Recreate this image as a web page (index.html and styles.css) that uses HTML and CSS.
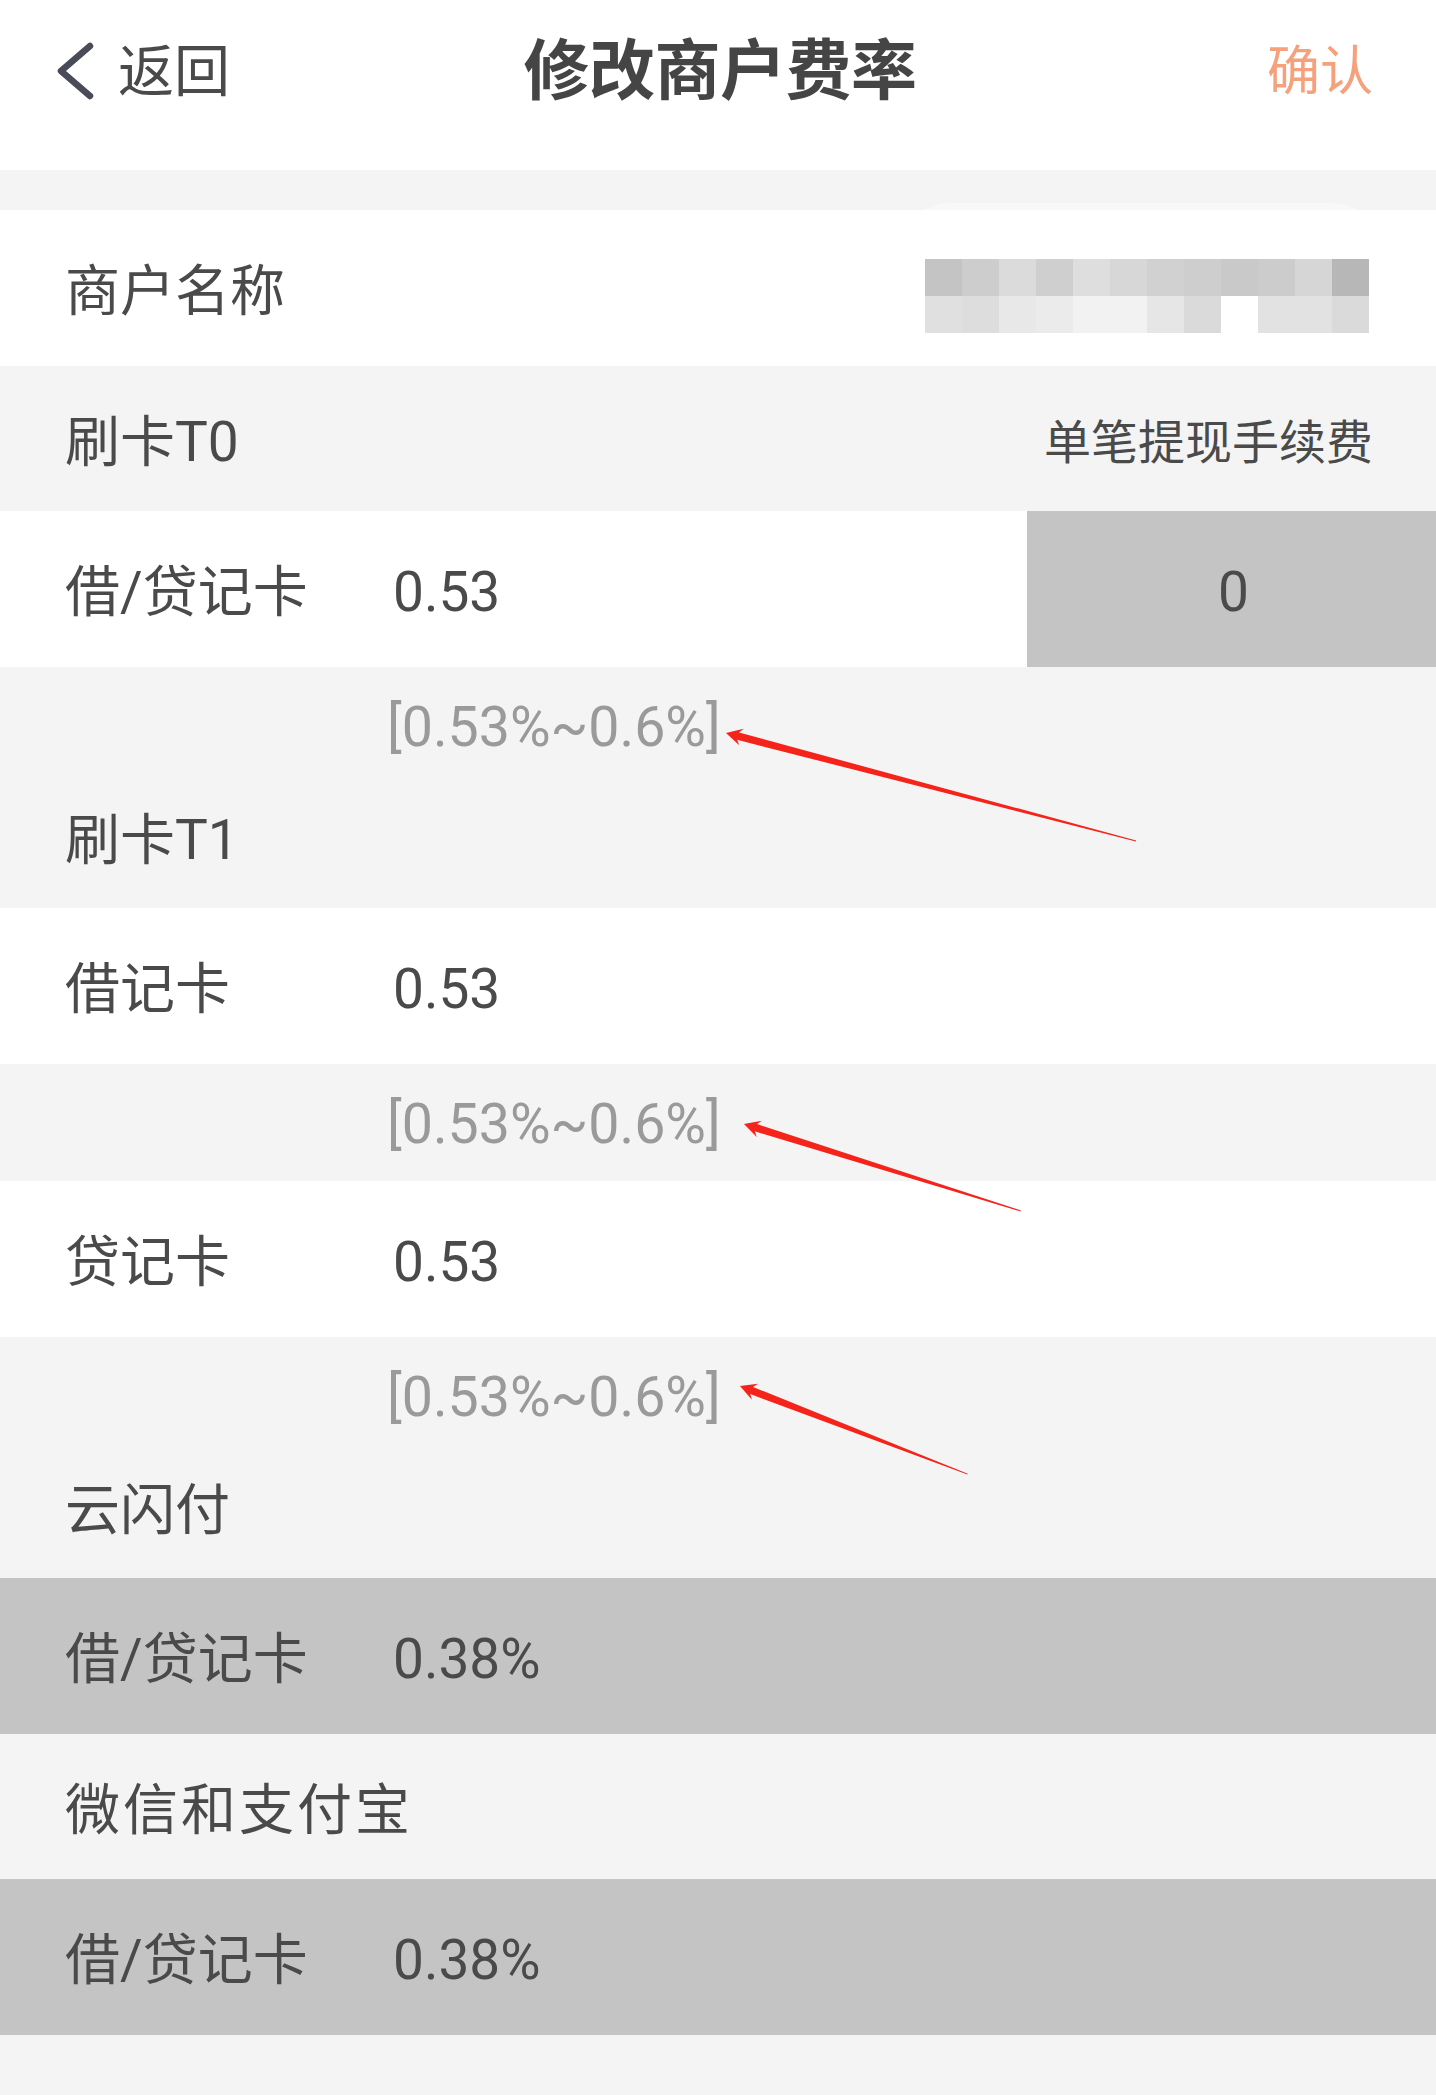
FILE: index.html
```html
<!DOCTYPE html>
<html lang="zh-CN">
<head>
<meta charset="utf-8">
<title>修改商户费率</title>
<link rel="stylesheet" href="styles.css">
</head>
<body>
<div class="page">
  <header class="topbar">
    <div class="back">
      <svg class="chevron" viewBox="0 0 44 72" width="44" height="72"><polyline points="38,10 9,35 38,60" fill="none" stroke="#494c58" stroke-width="6.5" stroke-linecap="round" stroke-linejoin="round"/></svg>
      <span>返回</span>
    </div>
    <h1 class="title">修改商户费率</h1>
    <div class="confirm">确认</div>
  </header>
  <div class="gap"></div>

  <div class="row white merchant">
    <span class="label">商户名称</span>
    <div class="mosaic">
      <span></span><span></span><span></span><span></span><span></span><span></span><span></span><span></span><span></span><span></span><span></span><span></span>
      <span></span><span></span><span></span><span></span><span></span><span></span><span></span><span></span><span></span><span></span><span></span><span></span>
    </div>
  </div>

  <div class="row section">
    <span class="label">刷卡T0</span>
    <span class="fee-head">单笔提现手续费</span>
  </div>

  <div class="row white entry">
    <span class="label">借/贷记卡</span>
    <span class="value">0.53</span>
    <span class="fee-box">0</span>
  </div>
  <div class="hint">[0.53%~0.6%]</div>
  <div class="row section tight">
    <span class="label">刷卡T1</span>
  </div>

  <div class="row white entry">
    <span class="label">借记卡</span>
    <span class="value">0.53</span>
  </div>
  <div class="hint">[0.53%~0.6%]</div>

  <div class="row white entry">
    <span class="label">贷记卡</span>
    <span class="value">0.53</span>
  </div>
  <div class="hint">[0.53%~0.6%]</div>
  <div class="row section tight">
    <span class="label">云闪付</span>
  </div>

  <div class="row locked entry">
    <span class="label">借/贷记卡</span>
    <span class="value">0.38%</span>
  </div>

  <div class="row section">
    <span class="label label-wide">微信和支付宝</span>
  </div>

  <div class="row locked entry">
    <span class="label">借/贷记卡</span>
    <span class="value">0.38%</span>
  </div>

  <svg class="arrows" viewBox="0 0 1436 2095" width="1436" height="2095">
    <g fill="#f5231a">
      <g transform="translate(726 733) rotate(14.76)">
        <polygon points="0,0 16,-8.5 12.5,-3.8 424,-0.5 424,0.5 12.5,3.8 16,8.5"/>
      </g>
      <g transform="translate(744 1124) rotate(17.44)">
        <polygon points="0,0 16,-8.5 12.5,-3.8 290,-0.5 290,0.5 12.5,3.8 16,8.5"/>
      </g>
      <g transform="translate(740 1386) rotate(21.17)">
        <polygon points="0,0 16,-8.5 12.5,-3.8 244,-0.5 244,0.5 12.5,3.8 16,8.5"/>
      </g>
    </g>
  </svg>
</div>
</body>
</html>
```

FILE: styles.css
```css
* { box-sizing: border-box; }

html, body {
  margin: 0;
  padding: 0;
  background: #f4f4f4;
}

body {
  font-family: Roboto, "Noto Sans CJK SC", "Noto Sans", sans-serif;
  color: #4a4a4a;
}

.page {
  position: relative;
  width: 1436px;
  min-height: 2095px;
  background: #f4f4f4;
}

/* ---------- top bar ---------- */
.topbar {
  display: grid;
  grid-template-columns: 1fr auto 1fr;
  align-items: center;
  height: 170px;
  padding: 0 63px 26px 63px;
  background: #ffffff;
}

.back {
  display: flex;
  align-items: center;
  gap: 22px;
  margin-left: -11px;
  font-size: 56px;
  color: #4a4a4a;
  line-height: 1;
}

.chevron { display: block; }

.title {
  margin: 0 0 0 4px;
  font-size: 66px;
  font-weight: 700;
  color: #454545;
  line-height: 1;
  letter-spacing: -0.5px;
}

.confirm {
  justify-self: end;
  font-size: 53px;
  color: #f5a17c;
  line-height: 1;
}

.gap { height: 40px; }

/* ---------- rows ---------- */
.row {
  display: flex;
  align-items: center;
  padding-left: 65px;
  padding-top: 7px;
  font-size: 55px;
  line-height: 1;
}

.row.white { background: #ffffff; }
.row.locked { background: #c4c4c4; }

.entry { height: 156px; }

.section {
  height: 145px;
  background: #f4f4f4;
  padding-right: 63px;
  justify-content: space-between;
}

.section .label {
  flex: 0 0 auto;
  white-space: nowrap;
}

.section .label-wide { letter-spacing: 3px; }

.section.tight {
  height: 124px;
  padding-top: 0;
  padding-bottom: 12px;
}

.label {
  flex: 0 0 328px;
  color: #4a4a4a;
  white-space: nowrap;
}

.value {
  flex: 1;
  color: #4a4a4a;
}

.fee-head {
  font-size: 47px;
  color: #4a4a4a;
}

.fee-box {
  align-self: stretch;
  width: 409px;
  margin-top: -7px;
  padding: 7px 0 0 4px;
  display: flex;
  align-items: center;
  justify-content: center;
  background: #c4c4c4;
  color: #4a4a4a;
}

.hint {
  height: 117px;
  display: flex;
  align-items: center;
  padding: 5px 0 0 387px;
  font-size: 55.5px;
  line-height: 1;
  color: #9a9a9a;
  background: #f4f4f4;
}

/* ---------- merchant name (pixelated) ---------- */
.merchant {
  height: 156px;
  justify-content: space-between;
  padding-right: 67px;
}

.merchant .label { flex: 0 0 auto; }

.mosaic {
  position: relative;
  display: grid;
  grid-template-columns: repeat(12, 37px);
  grid-auto-rows: 37px;
  margin-top: 9px;
}

.mosaic::before {
  content: "";
  position: absolute;
  left: -41px;
  top: -56px;
  width: 514px;
  height: 152px;
  border-radius: 70px;
  background: rgba(255, 255, 255, 0.4);
  z-index: 0;
}

.mosaic span { position: relative; z-index: 1; }

.mosaic span:nth-child(1)  { background: #c4c4c4; }
.mosaic span:nth-child(2)  { background: #cdcdcd; }
.mosaic span:nth-child(3)  { background: #dbdbdb; }
.mosaic span:nth-child(4)  { background: #cfcfcf; }
.mosaic span:nth-child(5)  { background: #dedede; }
.mosaic span:nth-child(6)  { background: #d7d7d7; }
.mosaic span:nth-child(7)  { background: #d1d1d1; }
.mosaic span:nth-child(8)  { background: #cecece; }
.mosaic span:nth-child(9)  { background: #c9c9c9; }
.mosaic span:nth-child(10) { background: #cccccc; }
.mosaic span:nth-child(11) { background: #d6d6d6; }
.mosaic span:nth-child(12) { background: #b7b7b7; }
.mosaic span:nth-child(13) { background: #e0e0e0; }
.mosaic span:nth-child(14) { background: #dddddd; }
.mosaic span:nth-child(15) { background: #e8e8e8; }
.mosaic span:nth-child(16) { background: #ebebeb; }
.mosaic span:nth-child(17) { background: #f2f2f2; }
.mosaic span:nth-child(18) { background: #f2f2f2; }
.mosaic span:nth-child(19) { background: #e6e6e6; }
.mosaic span:nth-child(20) { background: #dadada; }
.mosaic span:nth-child(21) { background: #ffffff; }
.mosaic span:nth-child(22) { background: #e2e2e2; }
.mosaic span:nth-child(23) { background: #e2e2e2; }
.mosaic span:nth-child(24) { background: #dadada; }

/* ---------- annotation arrows overlay ---------- */
.arrows {
  position: absolute;
  top: 0;
  left: 0;
  pointer-events: none;
}
```
